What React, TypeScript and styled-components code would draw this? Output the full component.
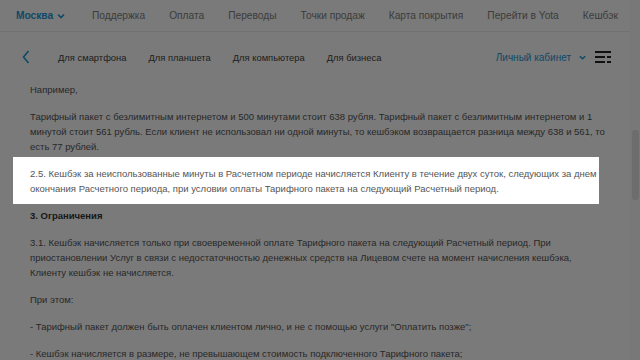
import styled, { createGlobalStyle } from "styled-components";

const GlobalStyle = createGlobalStyle`
    html, body {
        margin: 0;
        padding: 0;
        height: 100%;
        overflow: hidden;
        background: #ffffff;
    }
    body {
        font-family: "Liberation Sans", Arial, sans-serif;
        color: #555555;
    }
`;

const Page = styled.div`
    display: flex;
    width: 640px;
    height: 360px;
    overflow: hidden;
`;

const Main = styled.div`
    flex: 1;
    min-width: 0;
`;

const TopBar = styled.div`
    height: 31px;
    display: flex;
    align-items: center;
    padding-left: 16px;
    border-bottom: solid 1px #ececec;
    font-size: 10.2px;
`;

const City = styled.div`
    display: flex;
    align-items: center;
    gap: 3px;
    color: #1d9ad6;
    font-weight: 700;
    width: 76px;
`;

const TopLinks = styled.div`
    display: flex;
    gap: 24px;
    color: #808080;
`;

const SubBar = styled.div`
    height: 50px;
    display: flex;
    align-items: center;
    padding: 0 19px 0 22px;
`;

const Back = styled.div`
    display: flex;
    align-items: center;
    width: 36px;
`;

const SubLinks = styled.div`
    display: flex;
    gap: 22px;
    flex: 1;
    font-size: 9.4px;
    color: #444444;
`;

const Cabinet = styled.div`
    display: flex;
    align-items: center;
    gap: 7px;
    color: #1d9ad6;
    font-size: 10px;
`;

const Burger = styled.div`
    display: flex;
    margin-left: 8px;
`;

const Content = styled.div`
    padding: 0 39px 0 30px;
    font-size: 9.5px;
    line-height: 15px;
`;

const Para = styled.p<{ bold?: boolean }>`
    margin: 0 0 12px;
    font-weight: ${(p) => (p.bold ? 700 : 400)};
    color: ${(p) => (p.bold ? "#333333" : "#555555")};
    white-space: nowrap;
`;

const Spotlight = styled(Para)`
    position: relative;
    z-index: 11;
    background: #ffffff;
    margin: -9px -8px 4px -17px;
    padding: 9px 8px 8px 17px;
`;

const Dim = styled.div`
    position: fixed;
    inset: 0;
    z-index: 10;
    background: rgba(0, 0, 0, 0.52);
`;

const ScrollTrack = styled.div`
    width: 7px;
    border-left: solid 1px #f4f4f4;
    background: #fafafa;
    padding: 130px 1px 0 1px;
`;

const ScrollThumb = styled.div`
    height: 70px;
    border-radius: 3px;
    background: #e4e4e4;
`;

function Chevron({ color, size }: { color: string; size: number }) {
    return (
        <svg width={size} height={size} viewBox="0 0 10 10">
            <path d="M2 3.5 L5 6.5 L8 3.5" fill="none" stroke={color} strokeWidth="1.6" />
        </svg>
    );
}

export default function App() {
    return (
        <>
            <GlobalStyle />
            <Page>
                <Main>
                    <TopBar>
                        <City>
                            Москва
                            <Chevron color="#1d9ad6" size={10} />
                        </City>
                        <TopLinks>
                            <span>Поддержка</span>
                            <span>Оплата</span>
                            <span>Переводы</span>
                            <span>Точки продаж</span>
                            <span>Карта покрытия</span>
                            <span>Перейти в Yota</span>
                            <span>Кешбэк</span>
                        </TopLinks>
                    </TopBar>
                    <SubBar>
                        <Back>
                            <svg width="8" height="14" viewBox="0 0 8 14">
                                <path d="M6.5 1 L1.5 7 L6.5 13" fill="none" stroke="#1d9ad6" strokeWidth="1.6" />
                            </svg>
                        </Back>
                        <SubLinks>
                            <span>Для смартфона</span>
                            <span>Для планшета</span>
                            <span>Для компьютера</span>
                            <span>Для бизнеса</span>
                        </SubLinks>
                        <Cabinet>
                            Личный кабинет
                            <Chevron color="#1d9ad6" size={9} />
                        </Cabinet>
                        <Burger>
                            <svg width="16" height="14" viewBox="0 0 16 14">
                                <g stroke="#222222" strokeWidth="2">
                                    <path d="M0 2 H16" />
                                    <path d="M0 7 H10 M12 7 H16" />
                                    <path d="M0 12 H10 M12 12 H16" />
                                </g>
                            </svg>
                        </Burger>
                    </SubBar>
                    <Content>
                        <Para>Например,</Para>
                        <Para>
                            Тарифный пакет с безлимитным интернетом и 500 минутами стоит 638 рубля. Тарифный пакет с безлимитным интернетом и 1
                            <br />
                            минутой стоит 561 рубль. Если клиент не использовал ни одной минуты, то кешбэком возвращается разница между 638 и 561, то
                            <br />
                            есть 77 рублей.
                        </Para>
                        <Spotlight>
                            2.5. Кешбэк за неиспользованные минуты в Расчетном периоде начисляется Клиенту в течение двух суток, следующих за днем
                            <br />
                            окончания Расчетного периода, при условии оплаты Тарифного пакета на следующий Расчетный период.
                        </Spotlight>
                        <Para bold>3. Ограничения</Para>
                        <Para>
                            3.1. Кешбэк начисляется только при своевременной оплате Тарифного пакета на следующий Расчетный период. При
                            <br />
                            приостановлении Услуг в связи с недостаточностью денежных средств на Лицевом счете на момент начисления кешбэка,
                            <br />
                            Клиенту кешбэк не начисляется.
                        </Para>
                        <Para>При этом:</Para>
                        <Para>- Тарифный пакет должен быть оплачен клиентом лично, и не с помощью услуги "Оплатить позже";</Para>
                        <Para>- Кешбэк начисляется в размере, не превышающем стоимость подключенного Тарифного пакета;</Para>
                    </Content>
                </Main>
                <ScrollTrack>
                    <ScrollThumb />
                </ScrollTrack>
            </Page>
            <Dim />
        </>
    );
}
